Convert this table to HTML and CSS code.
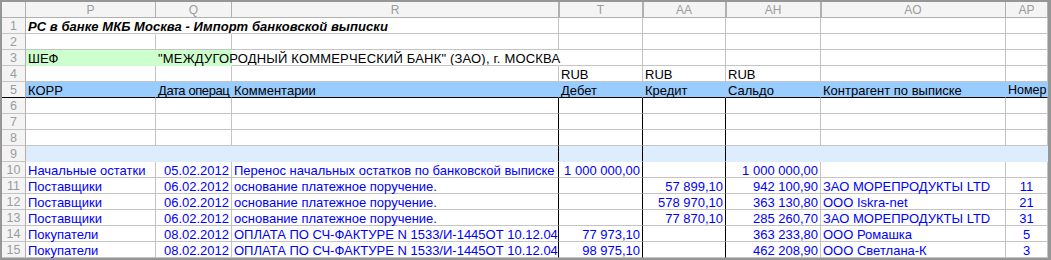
FILE: index.html
```html
<!DOCTYPE html>
<html lang="ru">
<head>
<meta charset="utf-8">
<title>РС в банке МКБ Москва</title>
<link rel="stylesheet" href="styles.css">
</head>
<body>
<div class="sheet">
  <div class="c h"></div>
  <div class="c h">P</div>
  <div class="c h">Q</div>
  <div class="c h">R</div>
  <div class="c h sep">T</div>
  <div class="c h sep">AA</div>
  <div class="c h sep">AH</div>
  <div class="c h sep">AO</div>
  <div class="c h">AP</div>

  <div class="c rn">1</div>
  <div class="c ov"><span class="title">РС в банке МКБ Москва - Импорт банковской выписки</span></div>
  <div class="c ov"></div>
  <div class="c"></div>
  <div class="c"></div>
  <div class="c"></div>
  <div class="c"></div>
  <div class="c"></div>
  <div class="c"></div>

  <div class="c rn">2</div>
  <div class="c"></div>
  <div class="c"></div>
  <div class="c"></div>
  <div class="c"></div>
  <div class="c"></div>
  <div class="c"></div>
  <div class="c"></div>
  <div class="c"></div>

  <div class="c rn">3</div>
  <div class="c g">ШЕФ</div>
  <div class="c g ov caps">"МЕЖДУГОРОДНЫЙ КОММЕРЧЕСКИЙ БАНК" (ЗАО), г. МОСКВА</div>
  <div class="c ov"></div>
  <div class="c"></div>
  <div class="c"></div>
  <div class="c"></div>
  <div class="c"></div>
  <div class="c"></div>

  <div class="c rn">4</div>
  <div class="c"></div>
  <div class="c"></div>
  <div class="c"></div>
  <div class="c">RUB</div>
  <div class="c">RUB</div>
  <div class="c">RUB</div>
  <div class="c"></div>
  <div class="c"></div>

  <div class="c rn rn5">5</div>
  <div class="c b5">КОРР</div>
  <div class="c b5 cut">Дата операц</div>
  <div class="c b5">Комментарии</div>
  <div class="c b5">Дебет</div>
  <div class="c b5">Кредит</div>
  <div class="c b5">Сальдо</div>
  <div class="c b5">Контрагент по выписке</div>
  <div class="c b5 tight">Номер</div>

  <div class="c rn">6</div>
  <div class="c"></div>
  <div class="c"></div>
  <div class="c bk"></div>
  <div class="c bk"></div>
  <div class="c bk"></div>
  <div class="c"></div>
  <div class="c"></div>
  <div class="c"></div>

  <div class="c rn">7</div>
  <div class="c"></div>
  <div class="c"></div>
  <div class="c bk"></div>
  <div class="c bk"></div>
  <div class="c bk"></div>
  <div class="c"></div>
  <div class="c"></div>
  <div class="c"></div>

  <div class="c rn">8</div>
  <div class="c"></div>
  <div class="c"></div>
  <div class="c bk"></div>
  <div class="c bk"></div>
  <div class="c bk"></div>
  <div class="c"></div>
  <div class="c"></div>
  <div class="c"></div>

  <div class="c rn">9</div>
  <div class="c b9"></div>
  <div class="c b9"></div>
  <div class="c b9 bk"></div>
  <div class="c b9 bk"></div>
  <div class="c b9 bk"></div>
  <div class="c b9"></div>
  <div class="c b9"></div>
  <div class="c b9"></div>

  <div class="c rn">10</div>
  <div class="c d">Начальные остатки</div>
  <div class="c d r">05.02.2012</div>
  <div class="c d bk">Перенос начальных остатков по банковской выписке</div>
  <div class="c d r bk">1 000 000,00</div>
  <div class="c d bk"></div>
  <div class="c d r">1 000 000,00</div>
  <div class="c d"></div>
  <div class="c d"></div>

  <div class="c rn">11</div>
  <div class="c d">Поставщики</div>
  <div class="c d r">06.02.2012</div>
  <div class="c d bk">основание платежное поручение.</div>
  <div class="c d bk"></div>
  <div class="c d r bk">57 899,10</div>
  <div class="c d r">942 100,90</div>
  <div class="c d">ЗАО МОРЕПРОДУКТЫ LTD</div>
  <div class="c d ctr">11</div>

  <div class="c rn">12</div>
  <div class="c d">Поставщики</div>
  <div class="c d r">06.02.2012</div>
  <div class="c d bk">основание платежное поручение.</div>
  <div class="c d bk"></div>
  <div class="c d r bk">578 970,10</div>
  <div class="c d r">363 130,80</div>
  <div class="c d">ООО Iskra-net</div>
  <div class="c d ctr">21</div>

  <div class="c rn">13</div>
  <div class="c d">Поставщики</div>
  <div class="c d r">06.02.2012</div>
  <div class="c d bk">основание платежное поручение.</div>
  <div class="c d bk"></div>
  <div class="c d r bk">77 870,10</div>
  <div class="c d r">285 260,70</div>
  <div class="c d">ЗАО МОРЕПРОДУКТЫ LTD</div>
  <div class="c d ctr">31</div>

  <div class="c rn">14</div>
  <div class="c d">Покупатели</div>
  <div class="c d r">08.02.2012</div>
  <div class="c d bk">ОПЛАТА ПО СЧ-ФАКТУРЕ N 1533/И-1445ОТ 10.12.04</div>
  <div class="c d r bk">77 973,10</div>
  <div class="c d bk"></div>
  <div class="c d r">363 233,80</div>
  <div class="c d">ООО Ромашка</div>
  <div class="c d ctr">5</div>

  <div class="c rn">15</div>
  <div class="c d">Покупатели</div>
  <div class="c d r">08.02.2012</div>
  <div class="c d bk">ОПЛАТА ПО СЧ-ФАКТУРЕ N 1533/И-1445ОТ 10.12.04</div>
  <div class="c d r bk">98 975,10</div>
  <div class="c d bk"></div>
  <div class="c d r">462 208,90</div>
  <div class="c d">ООО Светлана-К</div>
  <div class="c d ctr">3</div>
</div>
</body>
</html>
```

FILE: styles.css
```css
html, body {
  margin: 0;
  padding: 0;
  background: #ffffff;
}

.sheet {
  box-sizing: border-box;
  width: 1051px;
  height: 260px;
  border-top: 2px solid #969696;
  border-left: 2px solid #969696;
  border-bottom: 2px solid #969696;
  border-right: 3px solid #969696;
  background: #ffffff;
  display: grid;
  grid-template-columns: 24px 130px 76px 327px 84px 83px 95px 185px 42px;
  grid-auto-rows: 16px;
  font-family: "Liberation Sans", Arial, sans-serif;
  font-size: 13px;
  color: #000000;
}

.c {
  box-sizing: border-box;
  height: 16px;
  padding: 2px 2px 0 2px;
  line-height: 13px;
  white-space: nowrap;
  overflow-x: clip;
  overflow-y: visible;
  border-right: 1px solid #c4c4c4;
  border-bottom: 1px solid #c4c4c4;
}

.h {
  background: #f4f4f4;
  color: #9c9c9c;
  font-size: 12px;
  text-align: center;
  border-right-color: #b0b0b0;
  border-bottom-color: #b0b0b0;
}

.sep {
  box-shadow: inset 1px 0 0 #b0b0b0;
}

.rn {
  background: #f4f4f4;
  color: #9c9c9c;
  font-size: 12.5px;
  text-align: center;
  padding-left: 0;
  padding-right: 0;
  border-right-color: #b0b0b0;
  border-bottom-color: #c4c4c4;
}

.rn5 {
  border-bottom-color: #000000;
}

.ov {
  overflow-x: visible;
  border-right-color: transparent;
}

.title {
  font-weight: bold;
  font-style: italic;
  font-size: 13px;
  letter-spacing: 0.05px;
}

.caps {
  letter-spacing: 0.18px;
}

.cut {
  padding-right: 0;
  letter-spacing: -0.4px;
}

.tight {
  padding-right: 0;
  font-size: 12.5px;
}

.g {
  background: #ccffcc;
  border-right-color: #ccffcc;
  border-bottom-color: #ccffcc;
}

.b5 {
  background: #99ccff;
  border-right-color: #99ccff;
  border-bottom-color: #000000;
}

.b9 {
  background: #ddedfd;
  border-right-color: #ddedfd;
  border-bottom-color: #ddedfd;
}

.bk {
  border-right-color: #000000;
}

.d {
  color: #0000ff;
}

.r {
  text-align: right;
}

.ctr {
  text-align: center;
}
```
